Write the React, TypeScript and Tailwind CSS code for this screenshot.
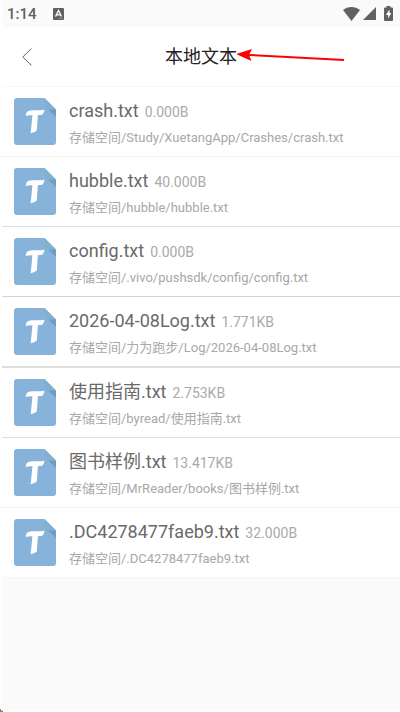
import { clsx } from "clsx";

interface iFile {
    name: string
    size: string
    path: string
    line: string
}

const files: iFile[] = [
    {name: "crash.txt", size: "0.000B", path: "存储空间/Study/XuetangApp/Crashes/crash.txt", line: "h-[70px] border-b border-[#f2f2f2]"},
    {name: "hubble.txt", size: "40.000B", path: "存储空间/hubble/hubble.txt", line: "h-[70px] border-b border-[#dfdfdf]"},
    {name: "config.txt", size: "0.000B", path: "存储空间/.vivo/pushsdk/config/config.txt", line: "h-[70px] border-b border-[#d4d4d4]"},
    {name: "2026-04-08Log.txt", size: "1.771KB", path: "存储空间/力为跑步/Log/2026-04-08Log.txt", line: "h-[71px] border-b-2 border-[#dedede]"},
    {name: "使用指南.txt", size: "2.753KB", path: "存储空间/byread/使用指南.txt", line: "h-[70px] border-b border-[#dfdfdf]"},
    {name: "图书样例.txt", size: "13.417KB", path: "存储空间/MrReader/books/图书样例.txt", line: "h-[70px] border-b border-[#f2f2f2]"},
    {name: ".DC4278477faeb9.txt", size: "32.000B", path: "存储空间/.DC4278477faeb9.txt", line: "h-[70px] border-b border-[#f7f7f7]"},
]

function FileIcon(){
    return(
        <svg viewBox="0 0 42 47" className="w-[42px] h-[47px] shrink-0" aria-hidden="true">
            <path d="M3 0H30.500L42 11.500V44a3 3 0 0 1-3 3H3a3 3 0 0 1-3-3V3a3 3 0 0 1 3-3z" fill="#87b3db"/>
            <path d="M30.500 0L42 11.500H34a3.500 3.500 0 0 1-3.500-3.500z" fill="#82b0cf"/>
            <path d="M34 11.500H42V19z" fill="#6c9dc4"/>
            <path d="M11.800 18C12 14.500 13.200 12.600 16.500 12.400C21 12.200 26 12.700 30.400 11.800C29.900 15 29.200 17 26 17.100L23.900 17.200C23.500 22 23.300 27 22.800 32.500C21 34 19 34.900 16.600 35.200C17.400 29 17.900 23 18.400 17.300C16 17.200 13.800 17.200 11.800 18z" fill="#fff"/>
        </svg>
    )
}

function StatusBar(){
    return(
        <div className="h-[27px] flex flex-row items-center bg-[#fafafa] pl-[5px] pr-[7px] text-[#616161]">
            <span className="text-[15px] font-medium leading-5">1:14</span>
            <svg viewBox="0 0 11 12" className="w-[11px] h-3 ml-4" aria-hidden="true">
                <rect width="11" height="12" rx="1" fill="#616161"/>
                <path d="M2.500 8.500L5.500 2.500L8.500 8.500M3.700 6.800H7.300" fill="none" stroke="#fff" strokeWidth="1.300"/>
                <path d="M6 10.300H9.500" stroke="#aaa" strokeWidth="0.800"/>
            </svg>
            <div className="ml-auto flex flex-row items-center">
                <svg viewBox="0 0 17 14" className="w-[17px] h-[14px]" aria-hidden="true">
                    <path d="M0 3C5-1 12-1 17 3L8.500 14z" fill="#616161"/>
                </svg>
                <svg viewBox="0 0 13 13" className="w-[13px] h-[13px] ml-[3px]" aria-hidden="true">
                    <path d="M13 0V13H0z" fill="#616161"/>
                </svg>
                <svg viewBox="0 0 9 15" className="w-[9px] h-[15px] ml-2" aria-hidden="true">
                    <path d="M2.500 0H6.500V1.500H8Q9 1.500 9 2.500V14Q9 15 8 15H1Q0 15 0 14V2.500Q0 1.500 1 1.500H2.500z" fill="#616161"/>
                    <path d="M5.500 3.500L2 9H4.200V12.500L7.300 7H5.500z" fill="#fff"/>
                </svg>
            </div>
        </div>
    )
}

export default function App(){
    return(
        <main className="relative min-h-screen flex flex-col bg-[#fafafa] border-l-2 border-b-2 border-white font-[Roboto,'Noto_Sans_CJK_SC',sans-serif]">
            <StatusBar/>
            <header className="h-[60px] grid grid-cols-[48px_1fr_48px] items-center bg-white border-b border-[#f7f7f7]">
                <button type="button" aria-label="返回" className="h-12 pl-5">
                    <svg viewBox="0 0 10 18" className="w-[10px] h-[18px]" aria-hidden="true">
                        <path d="M9.500 0.500L0.800 9L9.500 17.500" fill="none" stroke="#666" strokeWidth="1"/>
                    </svg>
                </button>
                <div className="flex justify-center">
                    <div className="relative">
                        <h1 className="text-lg leading-6 text-[#222]">本地文本</h1>
                        <svg viewBox="0 0 110 14" className="absolute left-full top-1 w-[110px] h-[14px]" aria-hidden="true">
                            <path d="M12 6L107 11" stroke="#f00" strokeWidth="2"/>
                            <path d="M-1 5L15 0L12 6L14.500 12z" fill="#f00"/>
                        </svg>
                    </div>
                </div>
            </header>
            <ul className="bg-white">
                {files.map((file) => (
                    <li key={file.name} className={clsx("flex flex-row items-center pl-3", file.line)}>
                        <FileIcon/>
                        <div className="ml-[13px] pt-1 flex flex-col whitespace-nowrap">
                            <div className="flex flex-row items-baseline">
                                <p className="text-lg leading-7 text-[#6a6a6a]">{file.name}</p>
                                <p className="ml-1.5 text-sm text-[#aaa]">{file.size}</p>
                            </div>
                            <p className="text-[13px] leading-[26px] text-[#a8a8a8]">{file.path}</p>
                        </div>
                    </li>
                ))}
            </ul>
            <svg viewBox="0 0 3 3" className="absolute -left-[2px] -bottom-[2px] w-[3px] h-[3px]" aria-hidden="true">
                <path d="M0 0H1V1.500H3V3H0z" fill="#85857a"/>
            </svg>
        </main>
    )
}
